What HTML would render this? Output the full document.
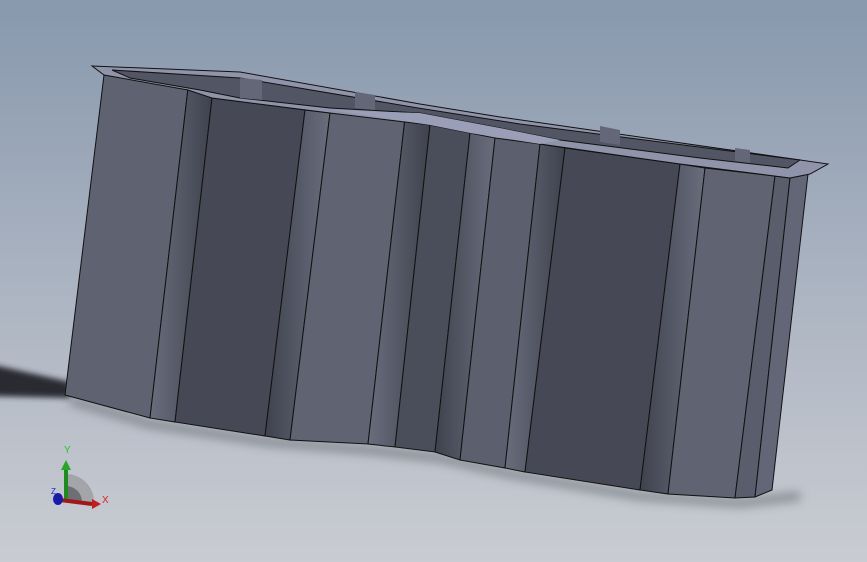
<!DOCTYPE html>
<html><head><meta charset="utf-8"><style>
html,body{margin:0;padding:0;width:867px;height:562px;overflow:hidden}
svg{display:block}
</style></head><body>
<svg width="867" height="562" viewBox="0 0 867 562" xmlns="http://www.w3.org/2000/svg">
<defs>
<linearGradient id="bg" x1="0" y1="0" x2="0" y2="1">
<stop offset="0" stop-color="#8898ad"/><stop offset="0.55" stop-color="#aeb6c3"/><stop offset="1" stop-color="#c9ccd2"/>
</linearGradient>
<linearGradient id="fl" x1="0" y1="0" x2="1" y2="0">
<stop offset="0" stop-color="#6a6d7c"/><stop offset="1" stop-color="#3f424e"/>
</linearGradient>
<linearGradient id="fr" x1="0" y1="0" x2="1" y2="0">
<stop offset="0" stop-color="#3f424e"/><stop offset="1" stop-color="#6a6d7c"/>
</linearGradient>
<filter id="blur" x="-20%" y="-50%" width="140%" height="200%"><feGaussianBlur stdDeviation="5"/></filter>
<filter id="blur2" x="-20%" y="-50%" width="140%" height="200%"><feGaussianBlur stdDeviation="3"/></filter>
</defs>
<rect width="867" height="562" fill="url(#bg)"/>
<!-- shadows -->
<polygon points="-10,364 70,382 70,398 -10,396" fill="#2a2c31" filter="url(#blur2)"/>
<polyline points="70,400 150,424 270,442 370,450 440,458 510,474 640,496 740,503 800,496" fill="none" stroke="#5a5d64" stroke-width="8" filter="url(#blur)" opacity="0.6"/>
<!-- faces -->
<g stroke="#111" stroke-width="1">
<polygon points="104,75 188,88 150,418 65,395" fill="#5f6270"/>
<polygon points="188,88 212,98 175,422 150,418" fill="url(#fl)"/>
<polygon points="212,98 305,110 265,436 175,422" fill="#464955"/>
<polygon points="305,110 330,113 290,440 265,436" fill="url(#fr)"/>
<polygon points="330,113 405,118 368,444 290,440" fill="#5f6372"/>
<polygon points="405,118 430,125 395,447 368,444" fill="url(#fl)"/>
<polygon points="430,125 470,133 435,452 395,447" fill="#4a4d5a"/>
<polygon points="470,133 495,138 460,460 435,452" fill="url(#fr)"/>
<polygon points="495,138 540,144 505,468 460,460" fill="#5c5f6d"/>
<polygon points="540,144 565,148 525,472 505,468" fill="url(#fl)"/>
<polygon points="565,148 680,164 640,490 525,472" fill="#464955"/>
<polygon points="680,164 705,168 668,494 640,490" fill="url(#fr)"/>
<polygon points="705,168 775,176 735,498 668,494" fill="#606372"/>
<polygon points="775,176 790,178 755,497 735,498" fill="#5a5d6b"/>
<polygon points="790,178 808,174 772,490 755,497" fill="#636676"/>
</g>
<!-- rim -->
<polygon points="92,66 240,72 420,104 500,117 828,164 810,174 790,178 680,164 540,144 430,125 330,113 212,98 188,90 104,75" fill="#9094ab" stroke="#111" stroke-width="1"/>
<polygon points="112,70 240,78 418,108 520,124 800,160 788,168 700,158 560,140 500,128 420,113 330,108 240,98 200,90 130,78" fill="#525564" stroke="#111" stroke-width="1"/>
<polygon points="240,78 262,80 262,100 240,98" fill="#646777"/>
<polygon points="355,92 375,95 375,110 355,108" fill="#646777"/>
<polygon points="600,126 620,130 620,145 600,142" fill="#646777"/>
<polygon points="735,148 750,150 750,163 735,161" fill="#646777"/>
<polygon points="330,110 420,113 500,128 560,140 540,144 470,133 430,125" fill="#9a9eb6"/>
<!-- triad -->
<path d="M66,474 A28,28 0 0 1 94,502 L66,502 Z" fill="#9b9c9f" opacity="0.8"/>
<path d="M66,486 A16,16 0 0 1 82,502 L66,502 Z" fill="#6e6f73"/>
<line x1="66" y1="500" x2="66" y2="470" stroke="#1f8a1f" stroke-width="4"/>
<polygon points="61,470 71,470 66,460" fill="#2aa52a"/>
<line x1="60" y1="500" x2="92" y2="504" stroke="#a01818" stroke-width="4"/>
<polygon points="92,499 92,509 101,504" fill="#c02020"/>
<ellipse cx="58" cy="499" rx="5" ry="6" fill="#1a1aa8"/>
<text x="64" y="453" font-family="Liberation Sans,sans-serif" font-size="10" fill="#22cc22">Y</text>
<text x="102" y="503" font-family="Liberation Sans,sans-serif" font-size="10" fill="#dd2222">X</text>
<text x="51" y="494" font-family="Liberation Sans,sans-serif" font-size="8" fill="#2222cc">Z</text>
</svg>
</body></html>
